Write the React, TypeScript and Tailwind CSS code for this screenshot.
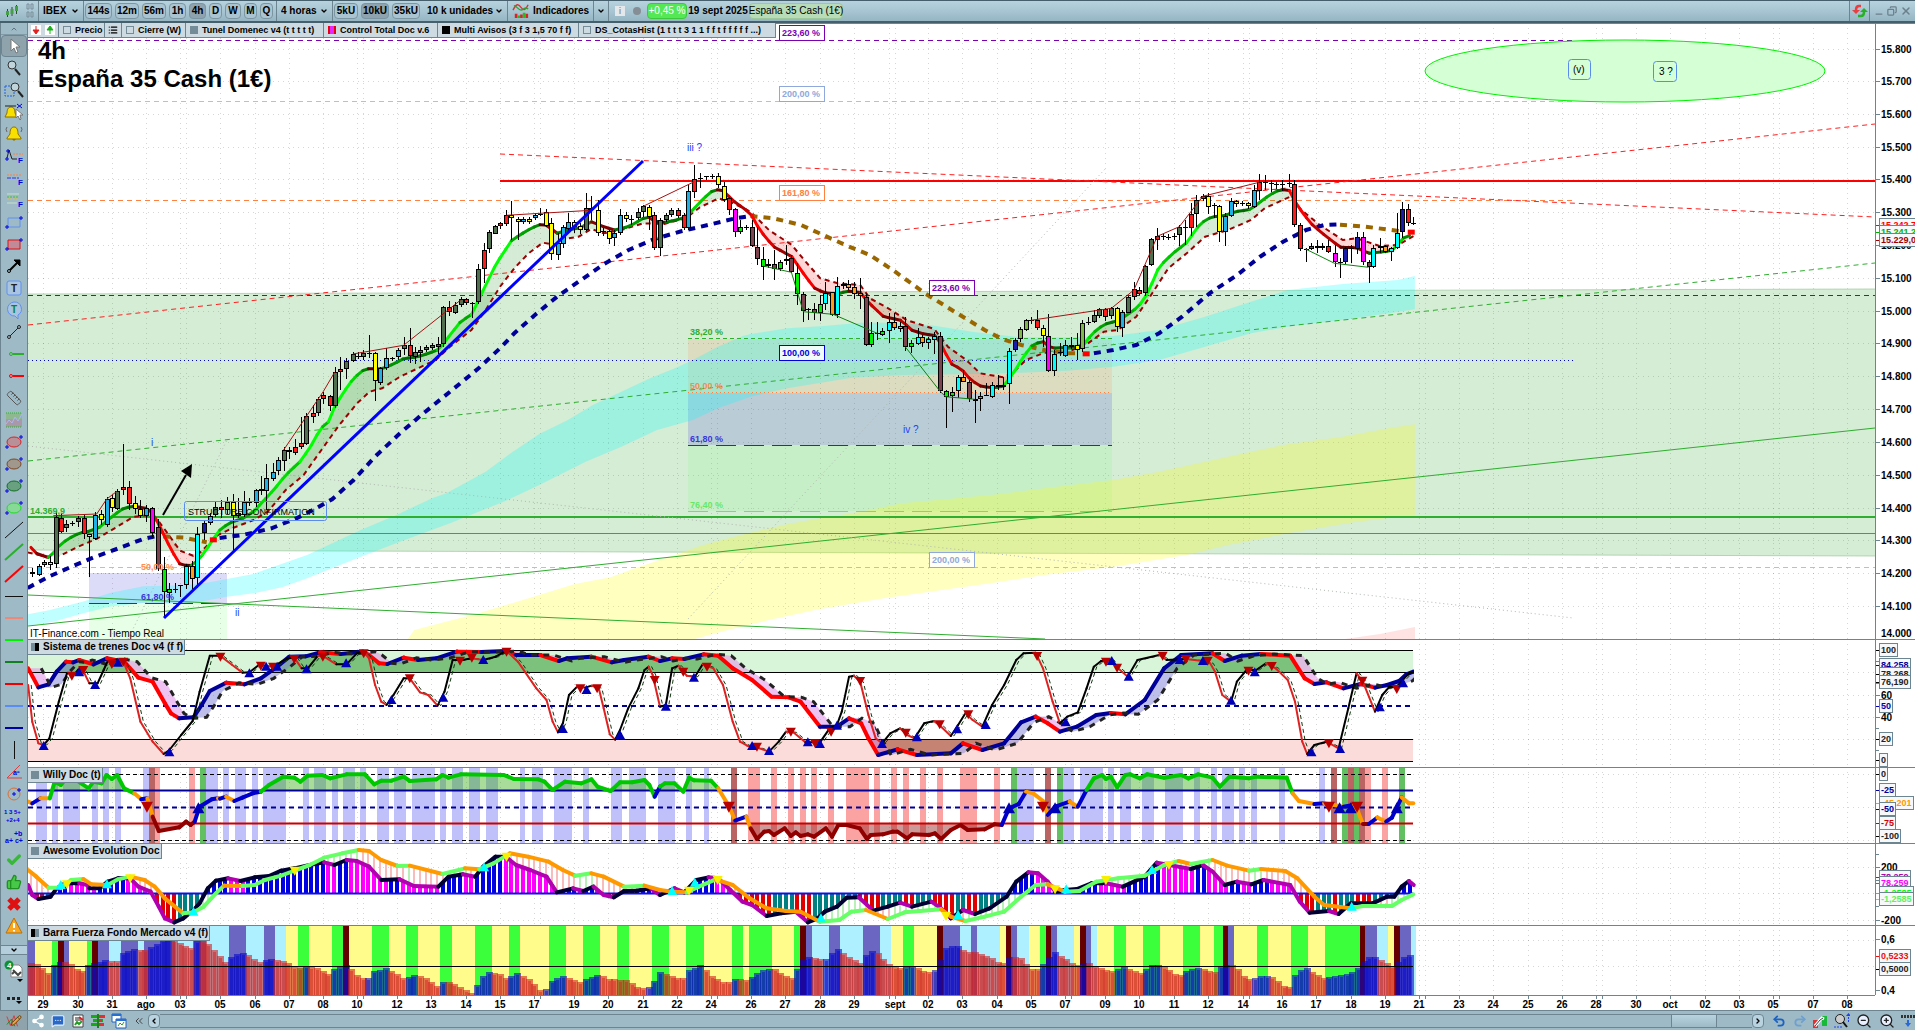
import { ReactNode } from "react";
import {
  ChevronDown,
  ChevronUp,
  ChevronsLeft,
  ChevronLeft,
  ChevronRight,
  Search,
  List,
  X,
  Minus,
  Copy,
  Bell,
  Ruler,
  ThumbsUp,
  Check,
  Undo2,
  Redo2,
  ZoomIn,
  ZoomOut,
  Share2,
  MessageSquareMore,
  Pencil,
} from "lucide-react";

type Pt = [number, number];

// Series are stored in blocks, each with its own origin and step.
const block = (x0: number, y0: number, kx: number, ky: number) => (flat: number[]) => {
  const out: Pt[] = [];
  for (let i = 0; i < flat.length; i += 2) {
    out.push([x0 + flat[i] / kx, y0 + flat[i + 1] / ky]);
  }
  return out;
};

const hiA = block(0, 20, 3, 3);
const loA = block(0, 500, 3, 2.958);
const mid = block(200, 130, 2.8, 3);
const end = block(700, 130, 2.178, 3);
const oscA = block(20, 635, 2.45, 3);
const oscB = block(660, 635, 2.063, 3);
const volA = block(20, 835, 2.45, 3);
const volB = block(660, 835, 2.063, 3);

const STEP = 5.72;
const LAST = 1413;

const str = (pts: Pt[]) =>
  pts.map(([x, y]) => `${x.toFixed(1)},${y.toFixed(1)}`).join(" ");

const yAt = (pts: Pt[], x: number) => {
  for (let i = 1; i < pts.length; i++) {
    if (x <= pts[i][0]) {
      const [ax, ay] = pts[i - 1];
      const [bx, by] = pts[i];
      return bx === ax ? by : ay + ((by - ay) * (x - ax)) / (bx - ax);
    }
  }
  return pts[pts.length - 1][1];
};

const bars: number[] = [];
for (let x = 31; x <= LAST; x += STEP) bars.push(x);

/* ------------------------------ price data ------------------------------ */

const candleColors: Record<string, string> = {
  g: "#4f6f4f",
  G: "#7fb84a",
  r: "#ff1a1a",
  y: "#ffff00",
  b: "#1fb0e6",
  c: "#00ffff",
  n: "#1a1aa8",
  m: "#ff00ff",
  p: "#7d4450",
  l: "#00f000",
  o: "#ff9a1a",
  k: "#000000",
};

interface Candle {
  x: number;
  top: number;
  bottom: number;
  high: number;
  low: number;
  color: string;
}

// x, body top, body bottom, high, low, colour
const candles = (toPx: (flat: number[]) => Pt[], rows: string): Candle[] =>
  rows
    .trim()
    .split(/\s*,\s*/)
    .map((row) => {
      const p = row.split(" ");
      const [a, b] = toPx([+p[0], +p[1], +p[0], +p[2]]);
      const [c, d] = toPx([+p[0], +p[3], +p[0], +p[4]]);
      return { x: a[0], top: a[1], bottom: b[1], high: c[1], low: d[1], color: candleColors[p[5]] };
    });

const allCandles: Candle[] = [
  ...candles(
    loA,
    `97 212 220 200 228 y,116 195 222 190 225 b,131 184 192 178 200 b,149 184 192 165 205 y,167 50 190 32 200 g,
182 52 94 38 98 r,199 70 82 60 95 g,216 67 69 62 78 k,235 53 65 48 80 g,251 52 100 45 115 r,268 102 110 100 228 y,286 45 114 35 118 b,
302 42 58 30 73 y,473 80 205 55 210 p,491 205 272 170 345 l,508 264 274 245 305 l,526 262 267 245 275 g,541 252 255 250 285 k,
559 196 252 190 265 c,577 195 235 180 262 o,592 100 232 80 260 c`,
  ),
  ...candles(
    hiA,
    `320 1437 1514 1430 1520 b,337 1435 1465 1425 1475 y,352 1413 1467 1408 1472 g,370 1402 1410 1272 1425 r,388 1402 1452 1383 1470 r,
406 1450 1466 1427 1480 y,421 1466 1487 1440 1495 y,439 1465 1487 1455 1505 b,457 1465 1540 1460 1550 m`,
  ),
  ...candles(
    mid,
    `10 1180 1210 1170 1230 n,27 1158 1180 1150 1185 b,43 1130 1155 1115 1160 g,58 1132 1140 1110 1165 r,75 1116 1140 1100 1150 G,
91 1115 1158 1092 1260 y,106 1150 1158 1105 1165 b,122 1116 1155 1083 1160 b,138 1117 1119 1105 1130 k,156 1081 1118 1077 1130 b,
170 1077 1084 1037 1095 r,186 1045 1084 1003 1140 b,203 1027 1048 1000 1055 b,218 991 1024 982 1035 b,234 961 992 950 1022 g,
250 960 966 950 985 r,265 951 968 927 975 r,282 940 952 860 955 r,298 859 941 850 945 g,315 849 862 825 880 r,329 807 850 800 856 g,
345 795 808 785 820 r,363 799 829 795 842 r,377 727 829 710 832 g,393 718 727 680 780 r,410 694 718 685 748 g,428 672 692 665 695 g,
443 679 681 665 685 k,457 670 682 660 690 g,474 670 673 615 685 k,489 670 754 665 812 y,505 715 758 710 765 b,522 685 715 655 720 b,
538 685 687 680 692 k,553 661 682 655 690 b,570 646 657 620 673 g,587 646 679 593 697 r,601 667 682 650 700 g,617 661 668 648 695 g,
634 652 660 645 665 g,649 646 654 638 660 g,665 643 650 620 672 r,681 532 643 528 650 g,698 532 546 512 556 r,713 526 548 515 552 g,
730 508 526 500 530 g,746 508 520 503 525 r,761 519 521 517 565 k,777 418 517 403 522 g,794 361 418 340 460 r,810 307 358 300 370 g,
825 289 311 285 313 g,841 280 289 275 295 r,858 256 283 240 288 r,872 254 265 212 330 y,889 268 275 260 330 y,905 268 275 260 280 b,
922 268 275 262 282 y,937 254 265 248 270 b,953 253 255 235 258 k,970 247 289 238 292 y,984 280 373 265 390 y,1001 340 374 310 390 b,
1017 292 342 285 355 b,1031 277 298 250 305 b,1048 276 292 270 310 y,1065 289 300 280 312 y,1082 235 299 190 305 g,1096 234 240 197 270 r,
1113 241 310 210 318 y,1129 303 306 295 318 k,1144 304 328 300 342 y,1160 309 325 300 347 b,1177 256 310 237 315 b,1193 256 268 245 275 y,
1208 268 270 255 285 k,1225 247 265 235 272 g,1241 229 247 225 260 g,1257 230 262 225 300 y,1272 256 355 245 358 r,1289 271 355 265 378 g,
1305 256 271 250 277 g,1320 241 256 235 262 g,1337 241 258 235 265 r,1354 256 295 250 300 r,1367 184 295 165 300 b,1384 148 185 105 205 r,
1401 145 148 130 175 k,1417 139 142 137 150 k,1433 137 139 133 148 k,1449 139 166 130 175 y,1466 169 209 155 215 y,1480 205 239 200 255 r,
1497 238 305 235 322 m,1513 291 307 270 312 l,1529 290 292 285 300 k`,
  ),
  ...candles(
    end,
    `113 290 349 270 352 p,125 350 388 290 405 p,138 388 410 350 450 l,149 401 409 388 415 l,162 401 418 360 450 p,175 395 418 390 422 l,
187 388 394 345 405 l,199 385 427 375 430 p,212 428 491 400 525 l,225 491 542 485 575 p,236 538 541 535 570 k,249 538 550 520 572 p,
262 523 550 495 572 l,273 488 523 455 540 c,287 487 555 485 557 o,299 469 555 440 562 c,312 461 469 455 475 c,323 461 473 450 480 o,
336 472 493 455 505 o,349 490 497 443 535 o,361 502 646 490 650 p,373 610 646 575 650 l,386 609 612 575 628 k,397 604 616 595 620 l,
411 575 602 550 640 c,423 577 595 550 600 o,436 587 598 575 605 c,447 587 650 560 662 p,460 639 652 630 670 l,474 620 643 595 645 c,
484 620 640 615 650 o,497 626 640 620 655 c,510 617 629 605 670 c,523 617 784 605 788 p,535 784 800 780 893 l,548 785 798 770 845 l,
561 740 784 735 805 c,572 742 755 720 757 o,585 757 808 750 815 p,598 808 813 780 878 p,610 799 808 785 843 l,622 796 799 760 800 k,
635 764 800 757 805 c,648 764 772 735 780 o,659 764 772 740 780 c,672 664 763 655 822 c,685 631 661 625 668 n,698 598 628 590 635 G,
709 571 600 568 605 G,721 571 573 560 580 k,735 571 595 540 600 r,746 595 618 585 652 y,759 617 724 553 728 m,772 672 724 660 737 c,
785 666 669 640 680 k,796 646 677 630 682 b,809 646 650 620 655 c,822 644 661 610 690 y,833 580 658 570 665 G,846 577 579 560 585 k,
859 556 576 540 580 g,870 538 557 533 562 g,883 538 560 535 573 r,896 535 559 530 565 g,908 535 592 530 605 y,920 547 593 540 620 b,
933 502 548 498 550 g,945 478 501 455 508 r,957 479 493 470 495 r,970 409 490 405 497 g,983 328 406 325 410 g,996 319 329 295 362 r,
1008 319 322 312 330 k,1020 320 323 312 330 k,1033 317 320 308 328 k,1044 290 316 285 347 g,1057 290 293 270 345 k,1070 253 293 220 320 r,
1081 210 253 195 290 g,1095 199 208 193 215 r,1107 199 230 190 253 y,1120 226 229 220 265 k,1131 227 307 225 335 y,1144 257 307 250 348 b,
1157 214 258 205 262 b,1168 214 223 210 230 y,1181 220 223 212 228 k,1194 219 228 215 235 y,1207 181 230 165 235 b,1218 157 184 133 210 r,
1231 156 159 135 180 k,1244 159 162 150 185 k,1255 162 165 155 175 k,1268 162 165 150 182 k,1282 159 162 132 170 k,1294 163 286 150 290 r,
1306 286 358 280 363 r,1319 356 359 355 398 k,1331 349 357 340 362 r,1343 347 355 330 370 r,1355 347 355 340 360 G,1368 347 367 330 370 r,
1382 370 397 345 410 m,1393 397 400 385 445 k,1405 355 397 350 400 n,1418 354 357 345 400 k,1430 320 358 305 370 n,1443 320 397 307 405 m,
1456 397 412 390 458 p,1466 355 412 345 415 c,1480 347 355 325 370 c,1493 347 365 345 370 o,1506 353 367 350 392 c,1517 310 353 250 358 c,
1530 238 307 217 325 n,1543 238 278 223 290 r,1554 278 281 262 285 k`,
  ),
];

const fastMa: Pt[] = [
  ...loA([83, 130, 110, 158, 150, 172, 165, 150, 185, 128, 210, 112, 240, 97, 270, 92, 300, 80, 320, 62, 345, 42, 370, 25, 400, 18, 440, 25, 460, 40, 490, 100, 515, 150, 540, 190, 570, 196, 592, 180]),
  ...mid([0, 1285, 30, 1240, 50, 1205, 80, 1180, 120, 1165, 150, 1145, 180, 1110, 210, 1075, 240, 1035, 280, 995, 300, 965, 315, 940, 330, 910, 345, 888, 363, 873, 377, 830, 400, 790, 430, 745, 455, 722, 475, 715, 500, 718, 520, 712, 545, 700, 570, 686, 610, 680, 640, 670, 665, 660, 681, 642, 700, 615, 730, 575, 761, 553, 780, 510, 800, 465, 830, 400, 872, 332, 900, 312, 930, 293, 955, 283, 970, 285, 1000, 310, 1030, 300, 1065, 293, 1095, 275, 1130, 290, 1160, 300, 1200, 290, 1241, 265, 1257, 262, 1275, 275, 1300, 278, 1340, 268, 1360, 262, 1384, 235, 1410, 205, 1440, 178]),
  ...end([50, 182, 75, 215, 110, 250, 130, 300, 160, 350, 200, 380, 230, 440, 250, 475, 270, 488, 300, 492, 320, 483, 349, 487, 365, 515, 400, 560, 440, 572, 460, 600, 490, 613, 515, 617, 530, 655, 545, 700, 570, 718, 590, 750, 610, 768, 635, 773, 660, 770, 680, 735, 700, 690, 720, 650, 745, 632, 765, 655, 800, 652, 833, 648, 855, 610, 880, 583, 910, 572, 930, 555, 955, 530, 975, 490, 1000, 410, 1030, 370, 1060, 338, 1090, 280, 1115, 260, 1140, 258, 1165, 245, 1200, 238, 1230, 205, 1255, 183, 1282, 177, 1300, 225, 1330, 280, 1360, 315, 1395, 352, 1430, 353, 1456, 370, 1490, 365, 1510, 360, 1530, 325, 1554, 312]),
];

const slowMa: Pt[] = [
  ...loA([83, 155, 140, 168, 180, 165, 230, 140, 290, 115, 350, 80, 400, 50, 440, 45, 470, 55, 500, 95, 540, 150, 580, 165]),
  ...mid([0, 1268, 50, 1215, 90, 1195, 150, 1170, 190, 1145, 240, 1080, 290, 1035, 340, 960, 390, 885, 440, 820, 475, 785, 510, 775, 560, 740, 610, 715, 660, 690, 700, 650, 760, 600, 800, 540, 840, 470, 880, 415, 920, 370, 960, 338, 1000, 345, 1030, 325, 1060, 320, 1096, 297, 1130, 310, 1180, 300, 1241, 280, 1300, 282, 1360, 265, 1400, 232]),
  ...end([40, 205, 70, 218, 110, 245, 150, 300, 200, 345, 230, 395, 262, 445, 300, 460, 349, 465, 370, 505, 410, 535, 450, 570, 510, 597, 540, 650, 580, 690, 610, 730, 660, 742, 680, 730, 710, 690, 750, 668, 800, 665, 840, 645, 880, 605, 910, 600, 950, 560, 980, 500, 1020, 415, 1060, 370, 1100, 320, 1150, 300, 1200, 270, 1230, 235, 1285, 200, 1310, 240, 1350, 285, 1400, 330, 1430, 325, 1480, 348, 1520, 345, 1554, 318]),
];

const cyanTop: Pt[] = [
  ...loA([83, 338, 150, 325, 250, 300, 330, 275, 430, 255, 530, 253]),
  ...mid([0, 1362, 60, 1350, 150, 1332, 220, 1305, 300, 1275, 360, 1245, 450, 1200, 550, 1155, 650, 1105, 690, 1090, 800, 1025, 870, 970, 950, 912, 1030, 870, 1100, 825, 1180, 785, 1260, 745, 1330, 715, 1380, 690, 1450, 650, 1520, 618]),
  ...end([110, 612, 190, 595, 270, 588, 350, 578, 410, 578, 500, 585, 600, 607, 700, 622, 800, 622, 900, 618, 1000, 600, 1100, 560, 1200, 515, 1280, 480, 1400, 462, 1520, 450, 1557, 438]),
];
const cyanBottom: Pt[] = [
  ...loA([83, 372, 160, 360, 250, 335, 330, 315, 430, 305, 530, 308]),
  ...mid([0, 1415, 75, 1400, 150, 1390, 230, 1372, 300, 1345, 380, 1310, 440, 1285, 560, 1235, 700, 1180, 850, 1115, 950, 1065, 1080, 995, 1180, 950, 1280, 900, 1380, 870, 1450, 835]),
  ...end([110, 800, 190, 775, 330, 743, 440, 735, 600, 732, 700, 728, 800, 722, 900, 710, 1000, 690, 1100, 650, 1200, 610, 1280, 590, 1400, 570, 1500, 550, 1557, 538]),
];
const yellowBand: Pt[] = [
  ...mid([580, 1530, 600, 1500, 780, 1450, 950, 1395, 1050, 1362, 1150, 1342, 1230, 1310, 1330, 1275, 1400, 1248, 1480, 1225]),
  ...end([110, 1208, 190, 1183, 250, 1168, 360, 1143, 440, 1120, 560, 1105, 650, 1093, 750, 1075, 900, 1050, 1000, 1025, 1100, 995, 1200, 965, 1280, 943, 1400, 920, 1500, 895, 1557, 883, 1557, 1155, 1430, 1175, 1280, 1210, 1150, 1245, 1060, 1275, 900, 1310, 750, 1335, 640, 1358, 500, 1385, 400, 1405, 250, 1440, 150, 1470, 60, 1500, -20, 1530]),
];

const trendMa: { color: string; pts: Pt[] }[] = [
  { color: "#000099", pts: loA([83, 260, 150, 225, 220, 195, 280, 170, 350, 145, 430, 115, 480, 105]) },
  { color: "#996600", pts: loA([490, 108, 550, 111, 620, 125]) },
  { color: "#000099", pts: mid([55, 1224, 120, 1215, 200, 1195, 270, 1165, 320, 1138, 370, 1108, 430, 1050, 490, 980, 560, 910, 620, 855, 700, 785, 780, 715, 840, 655, 880, 610, 940, 553, 1000, 500, 1060, 455, 1130, 403, 1200, 360, 1270, 328, 1350, 303, 1430, 283, 1500, 265, 1530, 260]) },
  { color: "#996600", pts: end([110, 258, 160, 265, 220, 285, 260, 310, 320, 347, 370, 375, 420, 420, 490, 490, 560, 550, 620, 600, 660, 628, 700, 645, 750, 660, 800, 670, 822, 670]) },
  { color: "#000099", pts: end([858, 670, 900, 660, 950, 645, 1000, 610, 1050, 560, 1110, 490, 1170, 435, 1220, 380, 1270, 335, 1320, 300, 1360, 285, 1390, 283]) },
  { color: "#996600", pts: end([1394, 284, 1450, 290, 1528, 304]) },
];
const flips: Pt[] = [...mid([36, 1228]), ...end([840, 670, 1548, 305])];

const swingHighs: Pt[][] = [
  hiA([160, 1487, 290, 1482, 320, 1437, 352, 1413]),
  mid([234, 960, 329, 810, 345, 785, 377, 727]),
  mid([428, 672, 570, 646, 730, 510]),
  mid([858, 256, 1096, 241]),
  mid([1241, 229, 1384, 155]),
  end([721, 571, 896, 535, 945, 480, 996, 319, 1044, 290, 1095, 199, 1218, 157]),
];
const swingLows: Pt[][] = [
  end([138, 408, 199, 427, 225, 545, 290, 553, 386, 610]),
  end([447, 650, 523, 784, 535, 800, 598, 808]),
  end([1319, 357, 1382, 400, 1456, 412]),
];

/* ------------------------------ time axis ------------------------------- */

const ticks: [number, string][] = [
  [43, "29"], [78, "30"], [112, "31"], [146, "ago"], [180, "03"], [186, ""], [220, "05"], [255, "06"], [289, "07"],
  [323, "08"], [357, "10"], [363, ""], [397, "12"], [431, "13"], [466, "14"], [500, "15"], [534, "17"], [540, ""],
  [574, "19"], [608, "20"], [643, "21"], [677, "22"], [711, "24"], [717, ""], [751, "26"], [785, "27"], [820, "28"],
  [854, "29"], [889, ""], [895, "sept"], [928, "02"], [962, "03"], [997, "04"], [1031, "05"], [1065, "07"], [1071, ""],
  [1105, "09"], [1139, "10"], [1174, "11"], [1208, "12"], [1243, "14"], [1249, ""], [1282, "16"], [1316, "17"],
  [1351, "18"], [1385, "19"], [1419, "21"], [1425, ""], [1459, "23"], [1493, "24"], [1528, "25"], [1562, "26"],
  [1596, "28"], [1602, ""], [1636, "30"], [1670, "oct"], [1705, "02"], [1739, "03"], [1773, "05"], [1779, ""],
  [1813, "07"], [1847, "08"],
];

const Grid = ({ rows, y0, y1 }: { rows: number[]; y0: number; y1: number }) => (
  <g stroke="#000" strokeOpacity="0.16" strokeDasharray="1 4" shapeRendering="crispEdges">
    {ticks.map(([x]) => (
      <line key={x} x1={x + 0.5} x2={x + 0.5} y1={y0} y2={y1} />
    ))}
    {rows.map((y) => (
      <line key={y} x1="28" x2="1875" y1={y + 0.5} y2={y + 0.5} />
    ))}
  </g>
);

const Marks = ({ pts, up, color, r = 5 }: { pts: Pt[]; up?: boolean; color: string; r?: number }) => (
  <g fill={color}>
    {pts.map(([x, y], i) => (
      <polygon
        key={i}
        points={
          up
            ? `${x - r},${y + r - 1} ${x + r},${y + r - 1} ${x},${y - r}`
            : `${x - r},${y - r + 1} ${x + r},${y - r + 1} ${x},${y + r}`
        }
      />
    ))}
  </g>
);

// Draws a line segment by segment, coloured by direction.
const Slope = ({ pts, width, color }: { pts: Pt[]; width: number; color: (a: Pt, b: Pt) => string }) => (
  <g strokeWidth={width} strokeLinecap="round" fill="none">
    {pts.slice(1).map((p, i) => (
      <line key={i} x1={pts[i][0]} y1={pts[i][1]} x2={p[0]} y2={p[1]} stroke={color(pts[i], p)} />
    ))}
  </g>
);

/* ------------------------------ price chart ----------------------------- */

const priceRows = [49, 81, 114, 147, 179, 212, 245, 278, 311, 343, 376, 409, 442, 475, 508, 540, 573, 606];

const fibTags: [number, number, string, string][] = [
  [779, 25, "223,60 %", "#7a00b0"],
  [779, 86, "200,00 %", "#90a8dc"],
  [779, 185, "161,80 %", "#ff8040"],
  [779, 345, "100,00 %", "#0000e0"],
  [929, 280, "223,60 %", "#7a00b0"],
  [929, 552, "200,00 %", "#90a8dc"],
];

const fibTexts: [number, number, string, string][] = [
  [690, 335, "38,20 %", "#2fae2f"],
  [690, 389, "50,00 %", "#ee9050"],
  [690, 442, "61,80 %", "#3838d8"],
  [690, 508, "76,40 %", "#66e866"],
  [141, 570, "50,00 %", "#ff8c50"],
  [141, 600, "61,80 %", "#3838d8"],
  [30, 514, "14.369,9", "#2fae2f"],
];

const maColor = (a: Pt, b: Pt) => {
  const s = (b[1] - a[1]) / (b[0] - a[0]);
  const v = Math.round(90 + Math.min(165, Math.abs(s) * 120));
  return s < 0 ? `rgb(0,${v},0)` : `rgb(${v},0,0)`;
};

const maSampled: Pt[] = bars.map((x) => [x, yAt(fastMa, x)]);

const PriceChart = () => (
  <>
    <Grid rows={priceRows} y0={23} y1={639} />
    <polygon points="28,294 1875,289 1875,556 28,550" fill="#2f9e2f" fillOpacity="0.2" />
    <path d="M28 294L1875 289M28 550L1875 556" stroke="#9cc89c" strokeOpacity="0.7" fill="none" />

    <rect x="688" y="339" width="424" height="54" fill="#ff8040" fillOpacity="0.14" />
    <rect x="688" y="393" width="424" height="52" fill="#5050dc" fillOpacity="0.2" />
    <rect x="688" y="445" width="424" height="66" fill="#80ff80" fillOpacity="0.16" />
    <rect x="89" y="573" width="138" height="30" fill="#5050dc" fillOpacity="0.2" />
    <rect x="89" y="603" width="138" height="36" fill="#80ff80" fillOpacity="0.2" />

    <polygon points={str([...cyanTop, ...[...cyanBottom].reverse()])} fill="#00ffff" fillOpacity="0.25" />
    <polygon points={str(yellowBand)} fill="#ffff00" fillOpacity="0.25" />
    <polygon points="1345,639 1380,634 1415,627 1415,639" fill="#ff4040" fillOpacity="0.15" />

    {/* levels */}
    <g fill="none" strokeWidth="1" shapeRendering="crispEdges">
      <path d="M28 40.5H1573M28 295.5H1875" stroke="#7a00b0" strokeDasharray="5 4" />
      <path d="M28 101.5H1573M28 567.5H1875" stroke="#a8c0f8" strokeDasharray="5 4" />
      <path d="M28 200.5H1573" stroke="#ff8040" strokeDasharray="5 4" />
      <path d="M28 360.5H1573" stroke="#0000c0" strokeDasharray="1 3" />
      <path d="M688 338.5H1112" stroke="#2fae2f" strokeDasharray="4 3" />
      <path d="M688 392.5H1112M89 573.5H227" stroke="#ff8040" strokeDasharray="1 3" />
      <path d="M688 445.5H1112M89 603.5H227" stroke="#2828d0" strokeDasharray="20 8" />
      <path d="M688 511.5H1112" stroke="#66e866" strokeDasharray="20 8" />
      <path d="M500 181H1875" stroke="#ff0000" strokeWidth="2" />
      <path d="M28 517H1875" stroke="#2fae2f" strokeWidth="2" />
      <path d="M28 533.5H1875" stroke="#2fae2f" />
    </g>
    <g fill="none" strokeWidth="1">
      <path d="M28 325L1875 124M500 154L1875 217" stroke="#ff2020" strokeDasharray="5 4" />
      <path d="M28 461L1875 263" stroke="#2fae2f" strokeDasharray="5 4" />
      <path d="M28 626L1875 428M28 595L1045 639" stroke="#2fae2f" />
      <path d="M28 446L1573 618M128 639L227 440M688 619L1106 168" stroke="#b0b8b0" strokeDasharray="1 3" />
    </g>

    {/* averages */}
    {bars.slice(1).map((x, i) => {
      const p = bars[i];
      const above = yAt(fastMa, x) < yAt(slowMa, x);
      return (
        <polygon
          key={x}
          points={str([[p, yAt(fastMa, p)], [x, yAt(fastMa, x)], [x, yAt(slowMa, x)], [p, yAt(slowMa, p)]])}
          fill={above ? "#008000" : "#ff0000"}
          fillOpacity="0.16"
        />
      );
    })}
    <polyline points={str(slowMa)} fill="none" stroke="#990000" strokeWidth="2" strokeDasharray="5 4" />
    {trendMa.map((t, i) => (
      <polyline key={i} points={str(t.pts)} fill="none" stroke={t.color} strokeWidth="4" strokeDasharray="7 6" />
    ))}
    <Slope pts={maSampled} width={3} color={maColor} />
    {flips.map(([x, y]) => (
      <rect key={x} x={x - 3} y={y - 2} width="7" height="5" fill="#ff0000" />
    ))}

    {/* candles */}
    <g shapeRendering="crispEdges">
      {allCandles.map((c) => {
        const x = Math.round(c.x);
        const top = Math.round(c.top);
        const h = Math.max(1, Math.round(c.bottom) - top);
        return (
          <g key={c.x}>
            <rect x={x} y={Math.round(c.high)} width="1" height={Math.max(1, Math.round(c.low - c.high))} fill="#000" />
            <rect x={x - 2} y={top} width="5" height={h} fill="#000" />
            {h > 2 && <rect x={x - 1} y={top + 1} width="3" height={h - 2} fill={c.color} />}
          </g>
        );
      })}
    </g>
    {swingHighs.map((s, i) => (
      <polyline key={i} points={str(s)} fill="none" stroke="#a81010" />
    ))}
    {swingLows.map((s, i) => (
      <polyline key={i} points={str(s)} fill="none" stroke="#108010" />
    ))}
    <line x1="164" y1="618" x2="643" y2="161" stroke="#0000ff" strokeWidth="3" />
    <path d="M163 515L186 475" stroke="#000" strokeWidth="2" />
    <polygon points="192,464 181,471 191,478" fill="#000" />

    <ellipse cx="1625" cy="71" rx="200" ry="31" fill="#d5ffd5" stroke="#00f000" />

    {/* captions */}
    <g fill="#000">
      <text x="38" y="59" className="text-[24px] font-bold">4h</text>
      <text x="38" y="87" className="text-[24px] font-bold">España 35 Cash (1€)</text>
      <text x="30" y="637" className="text-[10px] font-normal">IT-Finance.com - Tiempo Real</text>
      <rect x="184.5" y="501.5" width="142" height="19" rx="2" fill="none" stroke="#5a8cf0" />
      <text x="188" y="515" className="text-[9px] font-normal">STRUCTURE CONFIRMATION</text>
      <rect x="1568.5" y="59.5" width="22" height="20" rx="3" fill="none" stroke="#5a8cf0" />
      <text x="1573" y="73" className="text-[10px] font-normal">(v)</text>
      <rect x="1653.5" y="61.5" width="23" height="20" rx="3" fill="none" stroke="#5a8cf0" />
      <text x="1659" y="75" className="text-[10px] font-normal">3 ?</text>
    </g>
    <g fill="#2040ff" className="text-[10px] font-normal">
      <text x="151" y="446">i</text>
      <text x="235" y="616">ii</text>
      <text x="687" y="151">iii ?</text>
      <text x="903" y="433">iv ?</text>
    </g>
    {fibTags.map(([x, y, text, color]) => (
      <g key={`${x}-${y}`}>
        <rect x={x + 0.5} y={y + 0.5} width="45" height="15" fill="#fff" fillOpacity="0.85" stroke={color} />
        <text x={x + 3} y={y + 11} fill={color} className="text-[9px] font-bold">{text}</text>
      </g>
    ))}
    {fibTexts.map(([x, y, text, color]) => (
      <text key={`${x}-${y}`} x={x} y={y} fill={color} className="text-[9px] font-bold">{text}</text>
    ))}
  </>
);

/* --------------------------- Sistema de trenes -------------------------- */

const trenSlow: Pt[] = [
  ...oscA([20, 100, 45, 157, 70, 148, 90, 110, 113, 80, 130, 82, 145, 75, 180, 88, 213, 70, 255, 80, 290, 128, 325, 140, 355, 205, 370, 235, 390, 250, 425, 247, 445, 210, 465, 168, 505, 143, 550, 148, 590, 130, 630, 95, 660, 65, 700, 64, 735, 52, 785, 57, 840, 50, 855, 60, 880, 85, 900, 87, 940, 68, 975, 75, 1020, 70, 1070, 50, 1130, 51, 1190, 48, 1215, 60, 1275, 60, 1320, 78, 1340, 70, 1400, 65, 1450, 82, 1480, 75, 1540, 65]),
  ...oscB([0, 78, 25, 70, 50, 72, 90, 58, 120, 62, 150, 100, 190, 135, 230, 185, 265, 187, 290, 200, 330, 275, 365, 275, 390, 250, 415, 265, 430, 310, 450, 360, 490, 343, 530, 360, 600, 355, 625, 325, 665, 345, 710, 325, 745, 262, 775, 245, 800, 265, 825, 290, 860, 275, 900, 240, 930, 234, 960, 238, 1000, 195, 1040, 100, 1075, 60, 1140, 55, 1165, 78, 1200, 62, 1240, 57, 1300, 62, 1330, 130, 1350, 147, 1375, 142, 1410, 160, 1445, 147, 1475, 158, 1500, 150, 1525, 138, 1540, 118, 1554, 110]),
];
const trenFast: Pt[] = [
  ...oscA([20, 150, 30, 260, 45, 325, 58, 330, 72, 310, 95, 200, 115, 115, 135, 115, 145, 100, 155, 108, 170, 145, 190, 145, 205, 105, 215, 78, 240, 75, 255, 85, 270, 130, 295, 260, 325, 320, 352, 357, 366, 345, 395, 300, 423, 258, 440, 170, 465, 62, 490, 62, 520, 90, 545, 113, 562, 112, 585, 90, 620, 95, 655, 70, 672, 68, 690, 100, 705, 100, 730, 62, 745, 65, 775, 88, 800, 88, 825, 55, 842, 50, 855, 70, 870, 150, 885, 200, 898, 210, 915, 180, 940, 130, 955, 130, 980, 172, 1000, 180, 1023, 212, 1040, 170, 1060, 75, 1085, 75, 1105, 70, 1135, 75, 1165, 65, 1192, 48, 1220, 80, 1265, 160, 1290, 195, 1305, 260, 1318, 292, 1330, 265, 1345, 180, 1365, 155, 1385, 158, 1400, 152, 1418, 160, 1430, 220, 1445, 298, 1458, 314, 1470, 285, 1490, 220, 1515, 160, 1530, 105, 1540, 95, 1550, 120]),
  ...oscB([0, 215, 12, 210, 25, 100, 38, 92, 55, 122, 72, 125, 88, 88, 110, 100, 130, 150, 150, 260, 165, 320, 180, 332, 205, 340, 225, 350, 245, 320, 260, 290, 275, 292, 300, 322, 330, 322, 350, 280, 365, 270, 375, 230, 390, 125, 400, 122, 413, 140, 430, 240, 445, 310, 458, 325, 475, 295, 495, 280, 510, 300, 525, 310, 545, 265, 565, 258, 580, 275, 600, 303, 615, 270, 630, 235, 645, 255, 665, 275, 685, 210, 710, 150, 735, 75, 750, 55, 775, 53, 790, 100, 810, 200, 825, 265, 840, 245, 862, 232, 880, 160, 895, 95, 910, 78, 930, 75, 945, 100, 965, 125, 985, 75, 1030, 60, 1045, 75, 1085, 72, 1120, 78, 1135, 85, 1145, 110, 1160, 180, 1178, 200, 1190, 140, 1210, 105, 1230, 105, 1250, 85, 1270, 100, 1295, 135, 1310, 200, 1325, 320, 1335, 357, 1350, 330, 1375, 320, 1400, 340, 1420, 220, 1437, 115, 1450, 140, 1475, 230, 1490, 180, 1505, 155, 1520, 155, 1535, 130, 1545, 115, 1554, 112]),
];
const trenDown: Pt[] = [
  ...oscA([127, 122, 155, 105, 225, 87, 253, 80, 491, 65, 590, 92, 620, 95, 672, 72, 742, 65, 842, 55, 955, 130, 1078, 77, 1107, 68, 1192, 50, 1373, 160, 1414, 160, 1555, 135]),
  ...oscB([48, 110, 97, 95, 200, 335, 270, 290, 320, 325, 353, 290, 413, 138, 507, 293, 577, 268, 636, 238, 778, 63, 920, 80, 943, 98, 1037, 62, 1085, 72, 1130, 77, 1214, 107, 1262, 93, 1380, 325, 1449, 137, 1520, 162]),
];
const trenUp: Pt[] = [
  ...oscA([58, 333, 145, 112, 184, 150, 240, 83, 366, 352, 562, 115, 603, 95, 630, 95, 702, 103, 799, 85, 910, 195, 1037, 188, 1135, 75, 1330, 282, 1388, 165, 1470, 300]),
  ...oscB([12, 215, 70, 128, 190, 333, 225, 348, 305, 322, 330, 327, 365, 272, 458, 327, 530, 307, 613, 283, 672, 270, 837, 262, 932, 78, 967, 125, 1072, 75, 1120, 78, 1178, 197, 1227, 112, 1344, 352, 1403, 342, 1485, 217, 1533, 145]),
];

const trenSignal: Pt[] = trenSlow.map(([x, y]) => [x + 13, y]);

const TrenesChart = () => (
  <>
    <defs>
      <clipPath id="over"><rect x="28" y="650" width="1385" height="22" /></clipPath>
      <clipPath id="under"><rect x="28" y="739" width="1385" height="22" /></clipPath>
      <clipPath id="trenes"><rect x="28" y="640" width="1386" height="126" /></clipPath>
    </defs>
    <Grid rows={[672, 695, 717, 739]} y0={639} y1={767} />
    <rect x="28" y="650" width="1385" height="22" fill="#d9f5d9" />
    <rect x="28" y="739" width="1385" height="22" fill="#fcdcda" />
    <polygon points={`28,672 ${str(trenSlow)} 1413,672`} fill="#4aa54a" fillOpacity="0.65" clipPath="url(#over)" />
    <polygon points={`28,739 ${str(trenSlow)} 1413,739`} fill="#a04830" fillOpacity="0.6" clipPath="url(#under)" />
    <g clipPath="url(#trenes)">
      {trenSlow.slice(1).map((p, i) => {
        const q = trenSlow[i];
        return (
          <polygon
            key={i}
            points={str([q, p, [p[0] + 13, p[1]], [q[0] + 13, q[1]]])}
            fill={p[1] > q[1] ? "#e090e8" : "#8888d8"}
            fillOpacity="0.55"
          />
        );
      })}
      <path d="M28 650.5H1413M28 672.5H1413M28 739.5H1413M28 761.5H1413" stroke="#000" />
      <path d="M28 706H1413" stroke="#000099" strokeWidth="2" strokeDasharray="5 4" />
      <Slope pts={trenSlow} width={4} color={(a, b) => (b[1] > a[1] ? "#ff0000" : "#000099")} />
      <polyline points={str(trenSignal)} fill="none" stroke="#222" strokeWidth="3" strokeDasharray="6 6" />
      <polyline points={str(trenFast.map(([x, y]): Pt => [x + 3, y]))} fill="none" stroke="#103810" strokeDasharray="4 3" />
      <Slope pts={trenFast} width={2} color={(a, b) => (b[1] > a[1] ? "#dd2222" : "#000000")} />
      <Marks pts={trenDown} color="#b80000" />
      <Marks pts={trenUp} up color="#0000b8" />
    </g>
  </>
);

/* -------------------------------- Willy --------------------------------- */

const willyColors: Record<string, string> = { v: "#c0c0fb", r: "#fba2a2", d: "#bb6464", g: "#62c062" };

const spans = (toPx: (flat: number[]) => Pt[], rows: string) =>
  rows.split(",").map((row) => {
    const [a, b, c] = row.trim().split(" ");
    const [s, e] = toPx([+a, 0, +b, 0]);
    const x = Math.round(s[0]);
    return { x, w: Math.round(e[0]) - x, c };
  });

const willyBands = [
  ...spans(oscA, "38 66 v,78 92 v,105 148 v,176 190 v,203 217 v,233 247 v,302 316 v,316 330 d,330 344 r,414 428 r,441 456 g,456 485 v,497 511 v,527 553 v,568 582 v,595 651 v,693 707 v,720 750 v,764 778 v,792 820 v,834 848 v,875 903 v,917 945 v,960 1016 v,1028 1043 v,1058 1085 v,1100 1127 v,1142 1170 v,1225 1238 v,1254 1281 v,1308 1352 v,1380 1394 v,1448 1476 v,1492 1534 v,1562 1568 v"),
  ...spans(oscB, "0 30 v,54 66 v,90 101 v,146 159 d,182 206 r,229 241 r,264 276 r,289 301 r,312 324 r,347 359 r,384 431 r,442 454 r,477 489 r,501 513 r,536 548 r,571 583 r,619 654 r,690 702 r,724 737 g,737 772 v,794 806 d,819 831 g,831 855 v,867 914 v,924 937 v,948 972 v,995 1019 v,1042 1078 v,1102 1114 v,1137 1149 v,1160 1184 v,1195 1207 v,1219 1231 v,1277 1289 v,1360 1372 v,1384 1397 d,1407 1420 g,1420 1431 d,1431 1443 g,1443 1455 d,1455 1467 r,1490 1502 r,1525 1537 g"),
];

const willy: Pt[] = [
  ...oscA([20, 500, 30, 505, 50, 490, 73, 490, 85, 440, 100, 450, 120, 420, 150, 445, 168, 460, 180, 440, 200, 445, 212, 420, 225, 432, 238, 420, 255, 460, 280, 475, 297, 493, 312, 490, 325, 545, 340, 588, 390, 577, 407, 560, 418, 570, 428, 560, 440, 515, 470, 493, 485, 490, 490, 491, 505, 485, 525, 498, 545, 488, 570, 475, 590, 470, 610, 450, 645, 425, 672, 428, 687, 440, 705, 422, 740, 420, 760, 430, 800, 418, 845, 418, 868, 448, 885, 437, 910, 437, 940, 425, 955, 438, 1020, 433, 1035, 420, 1050, 428, 1080, 418, 1185, 420, 1210, 432, 1270, 433, 1285, 440, 1305, 465, 1335, 440, 1375, 445, 1400, 433, 1415, 455, 1447, 468, 1470, 442, 1500, 442, 1530, 435, 1542, 450, 1555, 485]),
  ...oscB([0, 455, 10, 445, 30, 445, 48, 470, 60, 428, 70, 436, 105, 437, 120, 460, 143, 515, 155, 557, 178, 545, 187, 580, 200, 612, 215, 590, 225, 588, 235, 600, 257, 580, 270, 603, 280, 592, 290, 603, 305, 598, 318, 605, 342, 580, 355, 605, 368, 570, 385, 570, 412, 580, 427, 612, 435, 600, 460, 598, 480, 590, 490, 590, 510, 610, 520, 598, 555, 600, 567, 595, 580, 612, 600, 585, 620, 570, 635, 585, 670, 583, 690, 568, 705, 570, 720, 520, 740, 507, 755, 470, 770, 475, 790, 498, 800, 540, 815, 515, 845, 500, 862, 515, 880, 465, 895, 430, 912, 420, 920, 432, 930, 425, 943, 457, 960, 420, 970, 418, 990, 430, 1005, 418, 1040, 428, 1075, 420, 1090, 430, 1110, 418, 1140, 428, 1155, 455, 1175, 425, 1215, 430, 1230, 425, 1293, 428, 1305, 475, 1318, 498, 1350, 507, 1370, 505, 1410, 515, 1430, 510, 1440, 530, 1450, 567, 1462, 567, 1480, 548, 1498, 560, 1510, 548, 1530, 487, 1545, 505, 1554, 505]),
];

const willyColor = (a: Pt, b: Pt) => {
  const y = (a[1] + b[1]) / 2;
  if (y < 791) return "#00c800";
  if (y > 823) return "#900000";
  return b[1] < a[1] ? "#0000cc" : "#ff9900";
};

const WillyChart = () => (
  <>
    <defs>
      <clipPath id="bull"><rect x="28" y="768" width="1385" height="22" /></clipPath>
      <clipPath id="bear"><rect x="28" y="824" width="1385" height="18" /></clipPath>
    </defs>
    <Grid rows={[774, 807, 840]} y0={767} y1={843} />
    {willyBands.map((b) => (
      <rect key={b.x} x={Math.max(28, b.x)} y="768" width={b.w} height="75" fill={willyColors[b.c]} />
    ))}
    <polygon points={`28,790 ${str(willy)} 1413,790`} fill="#40b020" fillOpacity="0.45" clipPath="url(#bull)" />
    <polygon points={`28,824 ${str(willy)} 1413,824`} fill="#902020" fillOpacity="0.45" clipPath="url(#bear)" />
    <g fill="none">
      <path d="M28 774.5H1413M28 840.5H1413" stroke="#000" strokeDasharray="4 3" />
      <path d="M28 790.5H1413" stroke="#000099" strokeWidth="2" />
      <path d="M28 807.5H1413" stroke="#000099" strokeWidth="2" strokeDasharray="5 4" />
      <path d="M28 823.5H1413" stroke="#cc0000" strokeWidth="2" />
    </g>
    <Slope pts={willy} width={4} color={willyColor} />
    <Marks pts={[...oscA([311, 515]), ...oscB([142, 515, 790, 515, 1380, 515, 1438, 515])]} color="#b80000" r={6} />
    <Marks pts={[...oscA([437, 520]), ...oscB([720, 520, 815, 520, 1402, 520, 1425, 520, 1520, 520])]} up color="#0000b8" r={6} />
  </>
);

/* ------------------------------- Awesome -------------------------------- */

const aoFast: Pt[] = [
  ...volA([20, 150, 30, 180, 45, 192, 75, 185, 90, 160, 110, 145, 145, 145, 165, 150, 170, 160, 195, 160, 215, 140, 240, 130, 270, 130, 290, 155, 320, 170, 340, 215, 355, 250, 378, 262, 400, 250, 425, 225, 440, 205, 460, 160, 480, 137, 510, 130, 540, 138, 575, 127, 610, 123, 640, 107, 672, 100, 710, 90, 745, 82, 770, 90, 800, 75, 825, 78, 855, 95, 885, 135, 930, 133, 965, 153, 1025, 155, 1050, 125, 1085, 118, 1115, 125, 1135, 95, 1165, 65, 1190, 65, 1215, 90, 1250, 105, 1290, 125, 1315, 172, 1355, 160, 1380, 168, 1405, 155, 1430, 180, 1455, 187, 1480, 168, 1510, 167, 1545, 160]),
  ...volB([0, 180, 30, 160, 50, 172, 75, 135, 100, 127, 120, 130, 145, 165, 170, 200, 190, 210, 220, 243, 250, 235, 280, 230, 305, 262, 325, 250, 340, 230, 365, 215, 385, 188, 410, 187, 440, 227, 470, 215, 495, 203, 520, 215, 560, 200, 580, 220, 600, 250, 625, 225, 650, 237, 680, 220, 715, 185, 735, 140, 760, 112, 780, 115, 800, 140, 815, 170, 835, 165, 860, 162, 890, 145, 920, 145, 955, 155, 1000, 125, 1025, 83, 1050, 90, 1095, 102, 1120, 90, 1140, 110, 1165, 150, 1190, 140, 1220, 148, 1245, 135, 1300, 150, 1320, 200, 1340, 233, 1380, 228, 1400, 237, 1425, 205, 1470, 205, 1500, 185, 1515, 185, 1530, 155, 1545, 138, 1555, 150]),
];
const aoSlow: Pt[] = [
  ...volA([20, 105, 40, 125, 70, 158, 100, 158, 125, 135, 155, 132, 175, 148, 215, 150, 240, 133, 270, 125, 305, 135, 330, 155, 355, 190, 400, 235, 425, 232, 450, 215, 480, 175, 500, 152, 545, 153, 575, 150, 600, 135, 640, 122, 670, 108, 710, 90, 745, 68, 790, 55, 830, 45, 855, 48, 885, 75, 925, 93, 955, 92, 1035, 117, 1090, 100, 1125, 103, 1160, 85, 1200, 55, 1245, 65, 1295, 80, 1330, 105, 1360, 122, 1400, 115, 1430, 125, 1480, 155, 1530, 152]),
  ...volB([0, 165, 25, 170, 55, 172, 80, 155, 115, 133, 150, 150, 185, 190, 220, 220, 260, 228, 290, 230, 330, 260, 370, 255, 395, 230, 425, 225, 470, 252, 505, 232, 580, 223, 600, 245, 630, 258, 670, 245, 710, 230, 745, 185, 775, 150, 800, 148, 835, 170, 865, 168, 900, 140, 945, 130, 1000, 122, 1040, 90, 1070, 78, 1095, 87, 1140, 75, 1170, 92, 1215, 107, 1240, 102, 1290, 108, 1315, 130, 1350, 185, 1370, 210, 1425, 220, 1450, 213, 1510, 213, 1530, 195, 1554, 178]),
];

const aoBar = (y: number, rising: boolean) => {
  if (y < 893) return rising ? "#0000e0" : "#ff00ff";
  return rising ? "#008080" : "#e00000";
};

const AwesomeChart = () => (
  <>
    <Grid rows={[867, 893, 920]} y0={843} y1={925} />
    {bars.map((x) => {
      const f = yAt(aoFast, x);
      const s = yAt(aoSlow, x);
      const rising = f < yAt(aoFast, x - STEP);
      const slowRising = s < yAt(aoSlow, x - STEP);
      const from = s < 893 === f < 893 ? f : 893;
      const left = Math.round(x);
      return (
        <g key={x}>
          {Math.abs(s - 893) > Math.abs(from - 893) && (
            <rect x={left - 1} y={Math.min(s, from)} width="2" height={Math.abs(s - from)} fill={slowRising ? "#b8f0b8" : "#f8bcbc"} />
          )}
          <rect x={left - 2} y={Math.min(f, 893)} width="4" height={Math.abs(f - 893)} fill={aoBar(f, rising)} />
        </g>
      );
    })}
    <path d="M28 893.5H1413" stroke="#1010e0" strokeWidth="2" />
    <Slope pts={aoFast} width={4} color={(a, b) => (b[1] > a[1] ? "#b000b0" : "#000033")} />
    <Slope pts={aoSlow} width={4} color={(a, b) => (b[1] > a[1] ? "#ff9900" : "#66ff66")} />
    <Marks pts={[...volA([100, 150, 213, 148, 425, 230, 1137, 97]), ...volB([25, 168, 72, 143, 332, 250, 615, 240, 838, 163, 1015, 105, 1427, 215])]} up color="#00ffff" />
    <Marks pts={[...volA([115, 148, 270, 130, 673, 107, 1192, 65]), ...volB([60, 167, 119, 135, 590, 243, 815, 163, 920, 135, 1050, 90])]} color="#f8f000" />
  </>
);

/* ----------------------------- Barra Fuerza ----------------------------- */

const fuerzaColors: Record<string, string> = { v: "#6a66c2", y: "#fffc8c", g: "#3cff3c", d: "#640000", s: "#aef0ff" };

const fuerzaBands = [
  ...spans(volA, "20 37 v,37 78 y,78 93 g,93 108 d,108 120 v,120 164 y,164 176 g,176 191 d,191 218 v,218 247 s,247 289 v,289 304 s,304 380 v,380 424 s,424 456 v,456 512 s,512 554 v,554 598 s,598 625 v,625 652 s,652 682 y,682 708 g,708 764 y,764 791 g,791 806 d,806 862 y,862 904 g,904 946 y,946 975 g,975 1029 y,1029 1058 g,1058 1115 y,1115 1156 g,1156 1198 y,1198 1225 g,1225 1296 y,1296 1338 g,1338 1379 y,1379 1421 g,1421 1463 y,1463 1492 g,1492 1548 y,1548 1568 g"),
  ...spans(volB, "0 19 g,19 54 y,54 90 g,90 149 y,149 171 g,171 184 y,184 231 g,231 276 y,276 289 g,289 301 d,301 314 v,314 349 s,349 371 v,371 419 s,419 454 v,454 477 s,477 501 y,501 524 g,524 571 y,571 584 d,584 619 v,619 642 s,642 654 v,654 701 s,701 714 y,714 724 d,724 737 v,737 761 s,761 784 y,784 796 g,796 807 d,807 819 v,819 854 s,854 867 y,867 879 d,879 889 v,889 902 s,902 937 y,937 961 g,961 997 y,997 1032 g,1032 1079 y,1079 1114 g,1114 1142 y,1142 1162 g,1162 1172 d,1172 1184 v,1184 1232 y,1232 1254 g,1254 1302 y,1302 1337 g,1337 1372 y,1372 1444 g,1444 1455 d,1455 1479 v,1479 1502 s,1502 1514 y,1514 1527 d,1527 1549 v,1549 1560 s"),
];
const fuerza: Pt[] = [
  ...volA([20, 380, 45, 390, 70, 415, 78, 395, 93, 380, 120, 380, 135, 400, 155, 408, 165, 390, 185, 382, 215, 375, 240, 380, 250, 355, 275, 342, 305, 348, 330, 330, 360, 305, 380, 318, 420, 340, 432, 318, 455, 318, 490, 365, 508, 385, 520, 362, 550, 352, 580, 378, 595, 385, 605, 370, 650, 378, 680, 403, 700, 392, 725, 398, 755, 418, 770, 402, 800, 388, 825, 420, 850, 435, 865, 408, 895, 400, 915, 410, 940, 430, 955, 425, 970, 420, 1000, 430, 1020, 455, 1035, 440, 1055, 440, 1085, 460, 1110, 475, 1130, 425, 1150, 408, 1180, 420, 1195, 432, 1218, 413, 1250, 435, 1275, 465, 1290, 462, 1300, 440, 1330, 422, 1370, 442, 1400, 425, 1420, 420, 1445, 432, 1485, 435, 1520, 460, 1545, 455]),
  ...volB([0, 412, 20, 420, 45, 435, 60, 405, 85, 390, 105, 420, 125, 440, 145, 440, 155, 430, 180, 435, 205, 410, 230, 398, 250, 415, 270, 432, 285, 400, 300, 365, 340, 375, 365, 340, 400, 375, 415, 385, 430, 350, 445, 348, 465, 380, 490, 402, 520, 392, 545, 410, 565, 410, 580, 370, 590, 340, 612, 330, 630, 350, 650, 350, 680, 365, 705, 390, 720, 365, 740, 365, 770, 405, 785, 400, 800, 370, 815, 352, 840, 375, 860, 392, 880, 382, 910, 400, 935, 410, 955, 395, 975, 405, 990, 415, 1020, 385, 1045, 400, 1070, 425, 1085, 410, 1105, 397, 1145, 412, 1160, 388, 1185, 390, 1205, 425, 1220, 435, 1245, 420, 1270, 430, 1295, 465, 1310, 420, 1330, 395, 1350, 415, 1370, 430, 1435, 410, 1450, 380, 1470, 360, 1500, 385, 1515, 395, 1530, 370, 1545, 358, 1555, 370]),
];

const FuerzaChart = () => (
  <>
    <Grid rows={[940, 966]} y0={925} y1={995} />
    <g shapeRendering="crispEdges">
      {fuerzaBands.map((b) => (
        <rect key={b.x} x={Math.max(28, b.x)} y="926" width={b.w} height="69" fill={fuerzaColors[b.c]} />
      ))}
      {bars.map((x) => {
        const y = yAt(fuerza, x);
        const up = y < yAt(fuerza, x - STEP);
        const left = Math.round(x) - 3;
        return (
          <g key={x} fill={up ? "#0808c8" : "#d02020"}>
            <rect x={left} y={y} width="7" height={995 - y} fillOpacity="0.6" />
            <rect x={left + 2} y={y + 2} width="3" height={993 - y} fillOpacity="0.45" />
          </g>
        );
      })}
    </g>
    <path d="M28 966.5H1413" stroke="#000" />
  </>
);

/* ------------------------------ value axis ------------------------------ */

interface AxisTag {
  y: number;
  text: string;
  color?: string;
  w?: number;
}

const Axis = ({ labels = [], tags = [], marks = [] }: { labels?: [number, string][]; tags?: AxisTag[]; marks?: number[] }) => (
  <>
    <path d={marks.map((y) => `M1876 ${y + 0.5}h3`).join("")} stroke="#6d8590" />
    {labels.map(([y, text]) => (
      <g key={text}>
        <path d={`M1876 ${y + 0.5}h4`} stroke="#6d8590" />
        <text x="1881" y={y + 4} fill="#000" className="text-[10px] font-bold">{text}</text>
      </g>
    ))}
    {tags.map((t, i) => (
      <g key={i}>
        <path d={`M1876 ${t.y + 0.5}h4`} stroke={t.color ?? "#000"} />
        <rect x="1879.5" y={t.y - 6.5} width={t.w ?? 31} height="13" fill="#f6f8fa" stroke="#6d8590" />
        <text x="1881" y={t.y + 3} fill={t.color ?? "#222"} className="text-[9px] font-bold">{t.text}</text>
      </g>
    ))}
  </>
);

const priceNames = ["15.800", "15.700", "15.600", "15.500", "15.400", "15.300", "15.200", "15.100", "15.000", "14.900", "14.800", "14.700", "14.600", "14.500", "14.400", "14.300", "14.200", "14.100"];

interface PanelProps {
  y0: number;
  y1: number;
  className: string;
  title?: ReactNode;
  axis: ReactNode;
  children: ReactNode;
}

const Panel = ({ y0, y1, className, title, axis, children }: PanelProps) => (
  <section className={`${className} basis-0 min-h-0 relative flex w-full bg-white`}>
    <svg className="h-full min-w-0 grow" viewBox={`28 ${y0} 1847 ${y1 - y0}`} preserveAspectRatio="none">
      {children}
      <path d={`M28 ${y0 + 0.5}H1875`} stroke="#6d8590" />
    </svg>
    <svg className="h-full w-10 shrink-0" viewBox={`1875 ${y0} 40 ${y1 - y0}`} preserveAspectRatio="none">
      <path d={`M1875.5 ${y0}V${y1}M1875 ${y0 + 0.5}H1915`} stroke="#6d8590" fill="none" />
      {axis}
    </svg>
    {title}
  </section>
);

const PanelTitle = ({ text, swatch }: { text: string; swatch: ReactNode }) => (
  <h2 className="absolute left-0 top-0 flex h-4 items-center gap-1 border border-l-0 border-[#6d8590] bg-[#cddae1] pl-[3px] pr-px text-[10px] font-bold text-black">
    {swatch}
    {text}
  </h2>
);

const GraySwatch = () => <span className="h-2 w-2 bg-[#748c98]" />;

/* ------------------------------- toolbars ------------------------------- */

const Divider = () => <span className="h-full w-px shrink-0 bg-[#6d8590]" />;

const TimeButton = ({ label, active, className }: { label: string; active?: boolean; className: string }) => (
  <button
    type="button"
    className={`${className} h-4 shrink-0 rounded-sm border border-[#7b95a2] ${
      active ? "bg-[#8ea3ae]" : "bg-[#aac5d1]"
    }`}
  >
    {label}
  </button>
);

const Dropdown = ({ label, value, className }: { label: string; value: string; className: string }) => (
  <label className={`${className} relative flex h-full shrink-0 items-center`} aria-label={label}>
    <select className="h-4 w-full appearance-none bg-transparent pl-1 leading-4" defaultValue={value}>
      <option>{value}</option>
    </select>
    <ChevronDown className="pointer-events-none absolute right-1 h-2 w-2" strokeWidth={4} />
  </label>
);

const TopBar = () => (
  <header className="flex h-[23px] w-full shrink-0 items-center justify-between border-b-2 border-t border-[#465f6c] bg-gradient-to-b from-[#b8d3e0] to-[#96b6c3]">
    <div className="flex h-full items-center">
      <svg viewBox="0 0 14 14" className="ml-1 h-3.5 w-4">
        <path d="M2.5 5v8M7 3v9M11.500 1v9" stroke="#2c4a2c" />
        <path d="M1 7h3v4H1zM5.500 5h3v5h-3zM10 2h3v5h-3z" fill="#44a044" />
      </svg>
      <svg viewBox="0 0 8 16" className="ml-1.5 mr-1 h-4 w-2" fill="none" stroke="#7b8f9a">
        <path d="M1 1h2v5H1zM5 1h2v5H5zM1 9h2v5H1zM5 9h2v5H5z" />
      </svg>
      <Divider />
      <Dropdown label="Valor" value="IBEX" className="w-11" />
      <Divider />
      <div className="ml-px mr-[3px] flex gap-[3px]">
        <TimeButton label="144s" className="w-[27px]" />
        <TimeButton label="12m" className="w-6" />
        <TimeButton label="56m" className="w-6" />
        <TimeButton label="1h" className="w-[17px]" />
        <TimeButton label="4h" className="w-[17px]" active />
        <TimeButton label="D" className="w-[13px]" />
        <TimeButton label="W" className="w-4" />
        <TimeButton label="M" className="w-[13px]" />
        <TimeButton label="Q" className="w-[13px]" />
      </div>
      <Divider />
      <Dropdown label="Periodo" value="4 horas" className="w-[55px]" />
      <Divider />
      <div className="ml-px mr-[3px] flex gap-[3px]">
        <TimeButton label="5kU" className="w-6" />
        <TimeButton label="10kU" className="w-7" active />
        <TimeButton label="35kU" className="w-7" />
      </div>
      <Dropdown label="Unidades" value="10 k unidades" className="w-[84px]" />
      <Divider />
      <button type="button" className="flex h-full w-[85px] shrink-0 items-center gap-[3px] pl-1 whitespace-nowrap">
        <svg viewBox="0 0 18 18" className="h-4 w-[18px] shrink-0" fill="none">
          <path d="M0 8c4-8 6-7 9-3s5 3 8-3" stroke="#e03030" strokeWidth="1.500" />
          <path d="M1 3c3 0 5 5 8 5s5-5 8-1" stroke="#30a030" strokeWidth="1.500" />
          <path d="M2 17v-5h3v5M8 17v-4h3v4M14 17v-5h3v5" fill="#e02020" />
          <path d="M5 17v-3h3v3M11 17v-6h3v6" fill="#20c020" />
        </svg>
        Indicadores
      </button>
      <Divider />
      <button type="button" aria-label="Más indicadores" className="flex h-full w-3.5 shrink-0 items-center justify-center">
        <ChevronDown className="h-2 w-2" strokeWidth={4} />
      </button>
      <Divider />
      <button type="button" className="ml-1.5 h-2.5 w-2.5 bg-[#e4e8ea] text-[9px] leading-none text-[#909ca2]">
        i
      </button>
      <span className="ml-2 h-2 w-2 rounded-full bg-[#848e94]" />
      <span className="ml-1.5 flex h-4 w-10 items-center justify-center rounded-sm border border-[#3cc83c] bg-[#55e855] font-normal whitespace-nowrap text-white">
        +0,45 %
      </span>
      <span className="w-[62px] text-center whitespace-nowrap">19 sept 2025</span>
      <span className="flex h-4 w-[94px] items-center justify-center rounded-sm border border-[#9cc89c] bg-[#b8dcb8] whitespace-nowrap font-normal">
        España 35 Cash (1€)
      </span>
    </div>
    <div className="flex h-full items-center text-[#6b808b]">
      <Divider />
      <button type="button" aria-label="Actualizar" className="w-[19px]">
        <svg viewBox="0 0 16 14" className="mx-auto h-3.5 w-4" fill="none" strokeWidth="2.500">
          <path d="M9 2H7Q4 2 4 6" stroke="#e84040" />
          <path d="M0 6h8L4 10z" fill="#e84040" />
          <path d="M6 12h3q3 0 3-4" stroke="#28b028" />
          <path d="M8 8h8l-4-4z" fill="#28b028" />
        </svg>
      </button>
      <Divider />
      <button type="button" aria-label="Minimizar" className="w-[15px]">
        <Minus className="ml-1 mt-1.5 h-2.5 w-2.5" strokeWidth={3} />
      </button>
      <button type="button" aria-label="Restaurar" className="w-[15px]">
        <Copy className="ml-0.5 h-2.5 w-2.5 -scale-x-100" strokeWidth={3} />
      </button>
      <button type="button" aria-label="Cerrar" className="w-[15px]">
        <X className="h-3 w-3" strokeWidth={3} />
      </button>
    </div>
  </header>
);

const legend: { text: string; className: string; swatch: string }[] = [
  { text: "Cierre (W)", className: "w-16", swatch: "border border-[#748c98]" },
  { text: "Tunel Domenec v4 (t t t t t)", className: "w-[138px]", swatch: "bg-[#748c98]" },
  { text: "Control Total Doc v.6", className: "w-[114px]", swatch: "border-x-2 border-red-600 bg-fuchsia-500" },
  { text: "Multi Avisos (3 f 3 1,5 70 f f)", className: "w-[141px]", swatch: "bg-black" },
  { text: "DS_CotasHist (1 t t t 3 1 1 f f t f f f f f ...)", className: "w-[196px]", swatch: "border border-[#748c98]" },
];

const Legend = () => (
  <ul className="absolute left-0 top-0 flex h-[15px] divide-x divide-[#6d8590] border-b border-r border-[#6d8590] bg-[#cddae1] text-[9px] font-bold text-black">
    <li className="flex w-[31px] items-center justify-center gap-1">
      <svg viewBox="0 0 10 10" className="h-2.5 w-2.5">
        <path d="M0 0h10v10H0z" fill="#fff" />
        <path d="M5 1v4M2 5h6L5 9z" stroke="#e02020" fill="#e02020" />
      </svg>
      <svg viewBox="0 0 10 10" className="h-2.5 w-2.5">
        <path d="M0 0h10v10H0z" fill="#fff" />
        <path d="M5 9V5M2 5h6L5 1z" stroke="#18b018" fill="#18b018" />
      </svg>
    </li>
    <li className="flex w-[46px] items-center gap-1 pl-1">
      <span className="h-2 w-2 shrink-0 border border-[#748c98]" />
      Precio
    </li>
    <li className="flex w-[17px] items-center justify-center">
      <List className="h-2.5 w-2.5" strokeWidth={3} />
    </li>
    {legend.map((l) => (
      <li key={l.text} className={`${l.className} flex items-center gap-1 pl-1 whitespace-nowrap`}>
        <span className={`${l.swatch} h-2 w-2 shrink-0`} />
        {l.text}
      </li>
    ))}
  </ul>
);

const plus = (x: number, y: number) => `M${x - 2} ${y}h4M${x} ${y - 2}v4`;

const Ellipse = ({ stroke, fill }: { stroke: string; fill: string }) => (
  <>
    <ellipse cx="10" cy="10" rx="7" ry="5" stroke={stroke} fill={fill} />
    <path d={plus(17, 5) + plus(3, 15)} stroke="#0000e0" />
  </>
);

const diag = (c: string, w = 1) => <path d="M1 18L19 2" stroke={c} strokeWidth={w} />;
const flat = (c: string) => <path d="M1 10h18" stroke={c} strokeWidth="2" />;

const letterF = (
  <text x="14" y="17" className="text-[8px] font-bold" fill="#0000e0" stroke="none">F</text>
);

const tools: { name: string; icon: ReactNode }[] = [
  { name: "Cursor", icon: <path d="M7 3v12l3-3 2 5 2-1-2-5h4z" fill="#fff" stroke="#777" /> },
  { name: "Zoom", icon: <><path d="M11 11l5 6" stroke="#222" strokeWidth="2" /><circle cx="8" cy="7" r="4" stroke="#333" fill="#c0d4dc" /></> },
  { name: "Zoom de zona", icon: <><path d="M1 6h9v10H1z" stroke="#2060e0" strokeDasharray="2 1" /><path d="M14 11l5 6" stroke="#222" strokeWidth="2" /><circle cx="11" cy="7" r="4" stroke="#333" fill="#c0d4dc" /></> },
  { name: "Alerta", icon: <><path d="M7 5c-3 0-4 3-4 6l-2 4h12l-2-4c0-3-1-6-4-6z" fill="#f8e000" stroke="#907000" /><path d="M1 4h11" stroke="#222" /><path d="M13 2l5 4M18 2l-5 4" stroke="#0000e0" /><path d="M12 7v9l2-2 2 4 1-1-1-4h3z" fill="#fff" stroke="#777" /></> },
  { name: "Campana", icon: <><path d="M10 3c-3 0-4 3-4 7l-3 4v1h14v-1l-3-4c0-4-1-7-4-7z" fill="#f8e000" stroke="#907000" /><path d="M8 15h4l-2 2z" fill="#907000" /><path d="M3 3q-2 2 0 5M17 3q2 2 0 5" stroke="#666" /></> },
  { name: "Extensión", icon: <><path d="M3 12L5 4l3 9h5" stroke="#222" /><path d="M9 8h10" stroke="#ff8040" strokeDasharray="2 1" /><path d={plus(4, 5) + plus(3, 13)} stroke="#0000e0" />{letterF}</> },
  { name: "Retroceso", icon: <><path d="M3 7h14" stroke="#ff8040" strokeDasharray="2 1" /><path d="M3 10h12" stroke="#3030e0" strokeDasharray="4 1" />{letterF}</> },
  { name: "Abanico", icon: <><path d="M3 4h12M3 13h10" stroke="#c8e0c8" /><path d="M3 7h12" stroke="#40c040" strokeDasharray="2 1" /><path d="M3 9h12" stroke="#e0c040" strokeDasharray="2 1" />{letterF}</> },
  { name: "Rectángulo", icon: <><path d="M4 6h12v9H4z" stroke="#6090f0" /><path d={plus(17, 6) + plus(3, 15)} stroke="#0000e0" /></> },
  { name: "Rectángulo rojo", icon: <><path d="M4 6h12v9H4z" stroke="#e01010" fill="#c08a98" /><path d={plus(17, 6) + plus(3, 15)} stroke="#0000e0" /></> },
  { name: "Flecha", icon: <><path d="M5 15L14 6" stroke="#000" strokeWidth="2" /><path d="M16 4v6l-6-6z" fill="#000" stroke="#000" /><circle cx="5" cy="15" r="1.500" stroke="#000" fill="#9dbac6" /></> },
  { name: "Texto", icon: <><rect x="3" y="3" width="14" height="14" rx="2" stroke="#6090f0" fill="#a8c4e0" /><text x="7" y="14" className="text-[10px] font-bold" fill="#222" stroke="none">T</text></> },
  { name: "Bocadillo", icon: <><path d="M10 2a7 7 0 1 0 1 14l3 3v-4A7 7 0 0 0 10 2z" stroke="#6090f0" fill="#a8c4e0" /><text x="7" y="13" className="text-[10px] font-bold" fill="#108030" stroke="none">T</text></> },
  { name: "Segmento", icon: <><path d="M6 14l8-8" stroke="#222" /><circle cx="5" cy="15" r="1.500" stroke="#222" /><circle cx="15" cy="5" r="1.500" stroke="#222" /></> },
  { name: "Horizontal verde", icon: <><path d="M9 10h11" stroke="#28b028" strokeWidth="2" /><circle cx="7" cy="10" r="1.500" stroke="#28b028" /></> },
  { name: "Horizontal roja", icon: <><path d="M9 10h11" stroke="#f00" strokeWidth="2" /><circle cx="7" cy="10" r="1.500" stroke="#f00" /></> },
  { name: "Regla", icon: <Ruler x="2" y="2" width="16" height="16" stroke="#555" strokeWidth="1.500" /> },
  { name: "Canal", icon: <><path d="M2 3h16v6H2z" fill="#90b890" /><path d="M2 9h16v8H2z" fill="#a898a8" /><path d="M2 3h16M2 17h16" stroke="#30b030" strokeDasharray="1 1" /><path d="M2 14l3-4 3 3 3-6 3 4 4-7" stroke="#a8b8f8" /></> },
  { name: "Elipse roja", icon: <Ellipse stroke="#e02020" fill="#b89098" /> },
  { name: "Elipse marrón", icon: <Ellipse stroke="#804820" fill="#a0988c" /> },
  { name: "Elipse verde", icon: <Ellipse stroke="#107020" fill="#68a080" /> },
  { name: "Elipse lima", icon: <Ellipse stroke="#20e020" fill="#88d898" /> },
  { name: "Línea negra", icon: diag("#111") },
  { name: "Línea verde", icon: diag("#28b028", 2) },
  { name: "Línea roja", icon: diag("#f00", 2) },
  { name: "Nivel negro", icon: <path d="M1 10.500h18" stroke="#111" /> },
  { name: "Nivel salmón", icon: flat("#f08878") },
  { name: "Nivel lima", icon: flat("#00f000") },
  { name: "Nivel verde", icon: flat("#108020") },
  { name: "Nivel rojo", icon: flat("#f00000") },
  { name: "Nivel azul", icon: flat("#5a8cf8") },
  { name: "Nivel marino", icon: flat("#0000a8") },
  { name: "Vertical", icon: <path d="M10.500 1v18" stroke="#111" /> },
  { name: "Ángulo", icon: <><path d="M18 16H3L16 3" stroke="#e04040" /><text x="9" y="13" className="text-[7px] font-bold" fill="#0000e0" stroke="none">aº</text></> },
  { name: "Ciclo", icon: <><circle cx="10" cy="10" r="6" stroke="#e07030" /><path d={plus(10, 10) + plus(15, 6)} stroke="#0000e0" /></> },
  { name: "Ondas", icon: <text x="0" y="8" className="text-[6px] font-bold" fill="#0000e0" stroke="none">1 3 5+<tspan x="2" y="16">+2+4</tspan></text> },
  { name: "ABC", icon: <text x="10" y="8" className="text-[7px] font-bold" fill="#0000e0" stroke="none">+b<tspan x="1" y="15">a+ c+</tspan></text> },
  { name: "Correcto", icon: <Check x="2" y="2" width="16" height="16" stroke="#38b838" strokeWidth="5" /> },
  { name: "Me gusta", icon: <ThumbsUp x="2" y="2" width="16" height="16" stroke="#209020" fill="#48c848" /> },
  { name: "Error", icon: <path d="M5 5l10 10M15 5L5 15" stroke="#e01010" strokeWidth="5" /> },
  { name: "Aviso", icon: <><path d="M10 2l8 15H2z" fill="#f8a820" stroke="#b87010" /><path d="M10 7v5M10 14v1.500" stroke="#fff" strokeWidth="2" /></> },
];

const Sidebar = () => (
  <aside className="flex w-7 shrink-0 flex-col border-l border-r border-[#6d8590] bg-[#9dbac6]">
    <button type="button" aria-label="Subir" className="flex h-3 w-full shrink-0 items-center justify-center border-b border-[#7f99a5]">
      <ChevronUp className="h-2 w-2 text-[#5f7480]" strokeWidth={3} />
    </button>
    <div className="flex min-h-0 grow basis-0 flex-col overflow-hidden">
      {tools.map((t, i) => (
        <button
          key={t.name}
          type="button"
          aria-label={t.name}
          className={`flex h-[22px] w-full shrink-0 items-center justify-center rounded-sm border ${
            i === 0 ? "border-[#6d8590] bg-[#8fa3ad]" : "border-transparent"
          }`}
        >
          <svg viewBox="0 0 20 20" className="h-5 w-5" fill="none">
            {t.icon}
          </svg>
        </button>
      ))}
    </div>
    <div className="flex h-[65px] shrink-0 flex-col items-center">
      <button type="button" aria-label="Bajar" className="flex h-2.5 w-full items-center justify-center border-y border-[#6d8590] bg-[#b4cfdb]">
        <ChevronDown className="h-2 w-2" strokeWidth={4} />
      </button>
      <button type="button" aria-label="Configurar" className="mt-1">
        <svg viewBox="0 0 20 22" className="h-6 w-5" fill="none">
          <path d="M7 5h8l3 3v9H7z" fill="#fff" stroke="#888" />
          <path d="M9 10l5 5 3-3M8 14l3-3" stroke="#444" strokeWidth="2" />
          <circle cx="5" cy="5" r="4.500" fill="#109030" />
          <text x="3" y="8" className="text-[8px] font-bold" fill="#fff">4</text>
          <path d="M13 19h6l-3 3z" fill="#000" />
        </svg>
      </button>
      <button type="button" aria-label="Más" className="mt-3">
        <svg viewBox="0 0 20 10" className="h-2.5 w-5">
          <path d="M3 2h3v3H3zM8 2h3v3H8zM13 2h3v3h-3z" fill="#222" />
          <path d="M12 6h6l-3 3z" fill="#000" />
        </svg>
      </button>
    </div>
  </aside>
);

const BottomBar = () => (
  <footer className="flex h-5 w-full shrink-0 items-center border-t border-[#6d8590] bg-[#9dbac6]">
    <button type="button" aria-label="Dibujar" className="flex h-full w-7 shrink-0 items-center justify-center border-r border-[#6d8590] bg-[#8fa3ad]">
      <svg viewBox="0 0 18 18" className="h-4 w-4" fill="none">
        <path d="M1 4l4 10L9 3l4 12" stroke="#e03030" />
        <path d="M1 13l5-6 4 8" stroke="#208020" />
        <Pencil x="5" y="2" width="13" height="13" fill="#f0a040" stroke="#604010" />
      </svg>
    </button>
    <div className="flex w-[120px] shrink-0 items-center justify-around">
      <button type="button" aria-label="Compartir"><Share2 className="h-3.5 w-3.5 text-white" fill="#fff" /></button>
      <button type="button" aria-label="Chat"><MessageSquareMore className="h-3.5 w-3.5 text-[#e8f0ff]" fill="#2868c8" /></button>
      <button type="button" aria-label="Informe">
        <svg viewBox="0 0 14 14" className="h-3.5 w-3.5" fill="none">
          <path d="M2 1h10v12H2z" fill="#fff" stroke="#444" />
          <path d="M4 4h6M4 6h6" stroke="#222" />
          <path d="M4 11l2-3 2 2 3-3" stroke="#20a020" strokeWidth="2" />
          <path d="M8 3l4 3" stroke="#e02020" strokeWidth="2" />
        </svg>
      </button>
      <button type="button" aria-label="Órdenes">
        <svg viewBox="0 0 14 14" className="h-3.5 w-3.5">
          <path d="M0 1h9v3H0zM2 5h10v3H2zM0 9h9v3H0z" fill="#18a818" />
          <path d="M8 1h6v3H8zM8 5h3v3H8zM8 9h5v3H8z" fill="#e03030" />
          <path d="M6 0h2v14H6z" fill="#208020" />
        </svg>
      </button>
      <button type="button" aria-label="Ventanas">
        <svg viewBox="0 0 16 16" className="h-4 w-4" fill="none">
          <path d="M1 1h9v8H1z" fill="#fff" stroke="#2060c0" />
          <path d="M5 6h10v9H5z" fill="#fff" stroke="#2060c0" />
          <path d="M5 6h10v2H5zM1 1h9v2H1z" fill="#2870d0" />
          <path d="M7 13l2-3 2 2 2-3" stroke="#20a020" />
        </svg>
      </button>
      <button type="button" aria-label="Plegar"><ChevronsLeft className="h-3 w-3 text-[#444]" /></button>
    </div>
    <button type="button" aria-label="Anterior" className="flex h-3.5 w-3 shrink-0 items-center justify-center rounded-sm border border-[#6d8590] bg-[#b9d4e0]">
      <ChevronLeft className="h-2 w-2" strokeWidth={4} />
    </button>
    <div className="flex h-3.5 grow border-y border-[#6d8590]">
      <div className="ml-auto mr-[35px] w-[46px] border-x border-[#6d8590] bg-gradient-to-b from-[#b8d3e0] to-[#9dbac6]" />
    </div>
    <button type="button" aria-label="Siguiente" className="flex h-3.5 w-3 shrink-0 items-center justify-center rounded-sm border border-[#6d8590] bg-[#b9d4e0]">
      <ChevronRight className="h-2 w-2" strokeWidth={4} />
    </button>
    <div className="flex w-[151px] shrink-0 items-center justify-between pl-2">
      <button type="button" aria-label="Deshacer"><Undo2 className="h-3.5 w-3.5 text-[#1c62c4]" strokeWidth={3} /></button>
      <button type="button" aria-label="Rehacer"><Redo2 className="h-3.5 w-3.5 text-[#6d9fd0]" strokeWidth={3} /></button>
      <button type="button" aria-label="Ajustes de velas">
        <svg viewBox="0 0 14 14" className="h-3.5 w-3.5" fill="none">
          <path d="M0 6h5v8H0z" fill="#e03030" />
          <path d="M9 2h5v10H9z" fill="#18b838" />
          <path d="M2 12l5-6 2-2 2 1" stroke="#fff" strokeWidth="3" />
          <path d="M2 12l5-6 3-2" stroke="#444" />
        </svg>
      </button>
      <button type="button" aria-label="Ajustar zoom">
        <svg viewBox="0 0 16 16" className="h-4 w-4" fill="none">
          <circle cx="6" cy="6" r="4.500" fill="#ccc" stroke="#222" />
          <path d="M9 9l4 5" stroke="#111" strokeWidth="2" />
          <path d="M0 14h9M14.500 1v9" stroke="#2040f0" strokeDasharray="2 1" />
          <path d="M12 3l2.500-3L17 3z" fill="#2040f0" />
        </svg>
      </button>
      <button type="button" aria-label="Alejar"><ZoomOut className="h-4 w-4 text-[#222]" fill="#e8f0ff" /></button>
      <button type="button" aria-label="Acercar"><ZoomIn className="h-4 w-4 text-[#222]" fill="#e8f0ff" /></button>
      <button type="button" aria-label="Escala">
        <svg viewBox="0 0 14 14" className="h-3.5 w-3.5">
          <path d="M0 1h2v3H0zM3 1h2v3H3zM6 1h2v3H6zM9 1h2v3H9zM12 1h2v3h-2z" fill="#333" />
          <path d="M6 6h2v3h2l-3 4-3-4h2z" fill="#2868d8" />
        </svg>
      </button>
    </div>
  </footer>
);

const App = () => {
  return (
    <div className="flex h-screen w-full flex-col overflow-hidden bg-white font-['Liberation_Sans',Arial,sans-serif] text-[10px] font-bold leading-none text-black">
      <TopBar />
      <div className="flex min-h-0 grow">
        <Sidebar />
        <main className="flex min-w-0 grow flex-col">
          <Panel
            y0={23}
            y1={639}
            className="grow-[616]"
            title={<Legend />}
            axis={
              <>
                <Axis labels={priceRows.map((y, i): [number, string] => [y, priceNames[i]])} />
                <text x="1881" y="637" className="text-[10px] font-bold">14.000</text>
                <Axis
                  tags={[
                    { y: 225, text: "15.242,7", color: "#ff0000", w: 40 },
                    { y: 232, text: "15.241,2", color: "#00b000", w: 40 },
                    { y: 240, text: "15.229,0", color: "#a00000", w: 40 },
                  ]}
                />
              </>
            }
          >
            <PriceChart />
          </Panel>
          <Panel
            y0={639}
            y1={767}
            className="grow-[128]"
            title={
              <PanelTitle
                text="Sistema de trenes Doc v4 (f f)"
                swatch={<span className="h-2 w-2 border-l-4 border-[#748c98] bg-black" />}
              />
            }
            axis={
              <Axis
                marks={[661, 683, 728, 750]}
                labels={[[695, "60"], [717, "40"]]}
                tags={[
                  { y: 650, text: "100", w: 18 },
                  { y: 665, text: "84,258", color: "#000099" },
                  { y: 674, text: "78,268" },
                  { y: 682, text: "76,190" },
                  { y: 706, text: "50", color: "#0000b0", w: 13 },
                  { y: 739, text: "20", w: 13 },
                  { y: 760, text: "0", w: 8 },
                ]}
              />
            }
          >
            <TrenesChart />
          </Panel>
          <Panel
            y0={767}
            y1={843}
            className="grow-[76]"
            title={<PanelTitle text="Willy Doc (t)" swatch={<GraySwatch />} />}
            axis={
              <Axis
                tags={[
                  { y: 774, text: "0", w: 8 },
                  { y: 790, text: "-25", color: "#000099", w: 16 },
                  { y: 803, text: "-45,201", color: "#ff9900", w: 34 },
                  { y: 809, text: "-50", color: "#000099", w: 16 },
                  { y: 823, text: "-75", color: "#cc0000", w: 16 },
                  { y: 836, text: "-100", w: 21 },
                ]}
              />
            }
          >
            <WillyChart />
          </Panel>
          <Panel
            y0={843}
            y1={925}
            className="grow-[82]"
            title={<PanelTitle text="Awesome Evolution Doc" swatch={<GraySwatch />} />}
            axis={
              <Axis
                marks={[854, 880, 906]}
                labels={[[867, "200"], [920, "-200"]]}
                tags={[
                  { y: 877, text: "78,259", color: "#b000b0" },
                  { y: 883, text: "78,259", color: "#ff00ff" },
                  { y: 893, text: "-1,2585", color: "#00ff00", w: 34 },
                  { y: 899, text: "-1,2585", color: "#60f060", w: 34 },
                ]}
              />
            }
          >
            <AwesomeChart />
          </Panel>
          <Panel
            y0={925}
            y1={995}
            className="grow-[70]"
            title={
              <PanelTitle
                text="Barra Fuerza Fondo Mercado v4 (f)"
                swatch={<span className="h-2 w-2 border-l-4 border-black bg-[#748c98]" />}
              />
            }
            axis={
              <Axis
                labels={[[939, "0,6"], [990, "0,4"]]}
                tags={[
                  { y: 956, text: "0,5233", color: "#e81010" },
                  { y: 969, text: "0,5000" },
                ]}
              />
            }
          >
            <FuerzaChart />
          </Panel>
          <div className="flex h-[15px] shrink-0 bg-white">
            <svg className="h-full min-w-0 grow" viewBox="28 995 1847 15" preserveAspectRatio="none">
              <path d="M28 995.5H1875" stroke="#6d8590" />
              {ticks.map(([x, label]) => (
                <g key={x}>
                  <path d={`M${x + 0.5} 996v3`} stroke="#6d8590" />
                  <text x={x} y="1008" textAnchor="middle" className="text-[10px] font-bold">{label}</text>
                </g>
              ))}
            </svg>
            <span className="w-10 shrink-0" />
          </div>
        </main>
      </div>
      <BottomBar />
    </div>
  );
};

export default App;
